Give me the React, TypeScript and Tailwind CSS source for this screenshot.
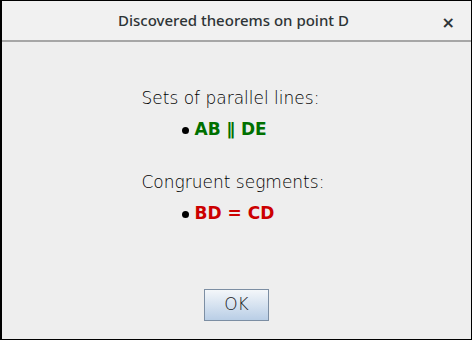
import React from "react";

const App = () => {
  return (
    <div className="w-[472px] h-[340px] bg-black p-[1px] pl-[2px]" style={{ fontFamily: '"DejaVu Sans", sans-serif' }}>
      <div className="flex flex-col h-full bg-[#eeeeee]">
        {/* title bar */}
        <div className="relative flex items-center justify-center h-[41px] bg-[#f1f1f1] border-b-2 border-[#a6a6a6]">
          <span className="text-[15px] text-[#2e3436] font-medium ml-[-6px]" style={{ fontFamily: '"Noto Sans", sans-serif' }}>
            Discovered theorems on point D
          </span>
          <span className="absolute right-[16px] top-[10px] text-[16px] font-bold text-[#2e3436]">×</span>
        </div>

        <div className="flex flex-col flex-1 items-center pt-[45px] text-[17px] text-black">
          <div className="w-[190px] ml-[-2px] font-extralight">
            <div className="leading-[22px] ml-[1px]">Sets of parallel lines:</div>
            <div className="flex items-center mt-[9px] ml-[41px] leading-[22px]">
              <span className="w-[7px] h-[7px] rounded-full bg-black mr-[6px] mt-[3px]" />
              <span className="font-semibold text-[#007000]">AB ∥ DE</span>
            </div>
            <div className="leading-[22px] mt-[31px] ml-[1px]">Congruent segments:</div>
            <div className="flex items-center mt-[9px] ml-[41px] leading-[22px]">
              <span className="w-[7px] h-[7px] rounded-full bg-black mr-[6px] mt-[3px]" />
              <span className="font-semibold text-[#cc0000]">BD = CD</span>
            </div>
          </div>

          <div className="mt-auto mb-[18px]">
            <button className="w-[65px] h-[32px] border border-[#7c8ea3] bg-gradient-to-b from-[#f4f7fa] to-[#b9cee6] text-[17px] font-extralight text-[#222]">
              OK
            </button>
          </div>
        </div>
      </div>
    </div>
  );
};

export default App;
